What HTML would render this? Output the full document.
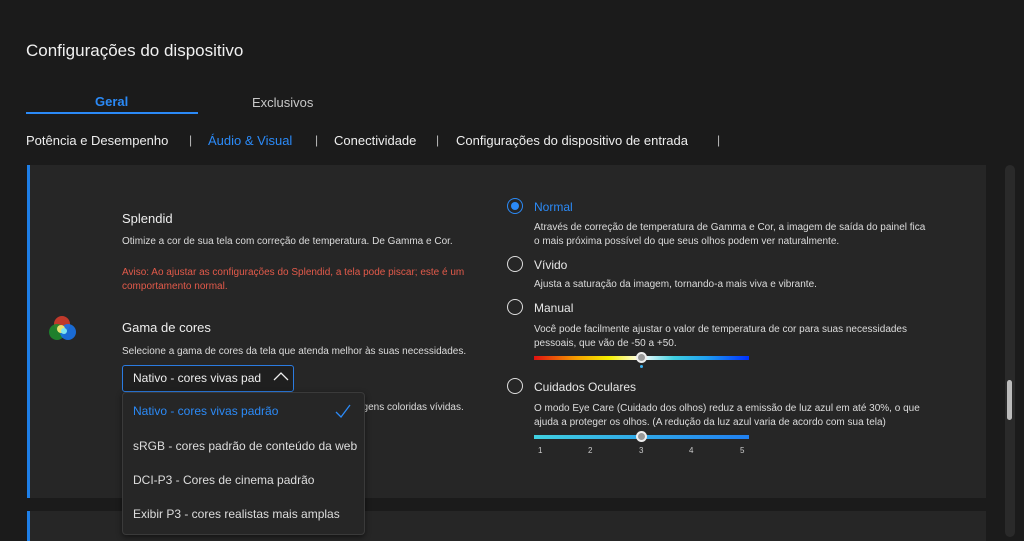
<!DOCTYPE html>
<html><head><meta charset="utf-8"><style>
*{margin:0;padding:0;box-sizing:border-box}
body{width:1024px;height:537px;background:#1b1b1b;font-family:"Liberation Sans",sans-serif;color:#e8e8e8;position:relative;overflow:hidden}
.a{position:absolute;white-space:nowrap}
.s{font-size:10px;color:#dcdcdc}
.rad{position:absolute;width:16px;height:16px;border:1.5px solid #ddd;border-radius:50%}
</style></head><body>
<div class="a" style="left:26px;top:41px;font-size:17px;color:#f0f0f0">Configurações do dispositivo</div>
<div class="a" style="left:95px;top:94px;font-size:13px;color:#2b8af7;font-weight:bold">Geral</div>
<div class="a" style="left:26px;top:112px;width:172px;height:2px;background:#2b8af7"></div>
<div class="a" style="left:252px;top:95px;font-size:13px;color:#c8c8c8">Exclusivos</div>
<div class="a" style="left:26px;top:133px;font-size:13px;color:#eee">Potência e Desempenho</div>
<div class="a" style="left:189px;top:133px;font-size:12px;color:#bbb">|</div>
<div class="a" style="left:208px;top:133px;font-size:13px;color:#2b8af7">Áudio &amp; Visual</div>
<div class="a" style="left:315px;top:133px;font-size:12px;color:#bbb">|</div>
<div class="a" style="left:334px;top:133px;font-size:13px;color:#eee">Conectividade</div>
<div class="a" style="left:436px;top:133px;font-size:12px;color:#bbb">|</div>
<div class="a" style="left:456px;top:133px;font-size:13px;color:#eee">Configurações do dispositivo de entrada</div>
<div class="a" style="left:717px;top:133px;font-size:12px;color:#bbb">|</div>

<div class="a" style="left:27px;top:165px;width:959px;height:333px;background:#262626;border-left:3px solid #1e7fe8"></div>
<div class="a" style="left:27px;top:511px;width:959px;height:30px;background:#262626;border-left:3px solid #1e7fe8"></div>
<div class="a" style="left:1005px;top:165px;width:10px;height:372px;background:#2a2a2a;border-radius:5px"></div>
<div class="a" style="left:1007px;top:380px;width:5px;height:40px;background:#bbb;border-radius:3px"></div>

<svg class="a" style="left:47px;top:313px" width="34" height="30"><circle cx="15" cy="11" r="8" fill="#c0392b"/><circle cx="10" cy="19" r="8" fill="#1e8a2e" opacity=".9"/><circle cx="21" cy="19" r="8" fill="#1a73e8" opacity=".9"/><circle cx="14" cy="16" r="4" fill="#e8e070"/><circle cx="17" cy="18" r="3" fill="#7ee6f0"/></svg>

<div class="a" style="left:122px;top:211px;font-size:13px;color:#eee">Splendid</div>
<div class="a s" style="left:122px;top:236px">Otimize a cor de sua tela com correção de temperatura. De Gamma e Cor.</div>
<div class="a s" style="left:122px;top:266px;color:#e25a4a;line-height:14px">Aviso: Ao ajustar as configurações do Splendid, a tela pode piscar; este é um<br>comportamento normal.</div>
<div class="a" style="left:122px;top:320px;font-size:13px;color:#eee">Gama de cores</div>
<div class="a s" style="left:122px;top:346px">Selecione a gama de cores da tela que atenda melhor às suas necessidades.</div>
<div class="a" style="left:122px;top:365px;width:172px;height:27px;border:1px solid #2b7be0;border-radius:3px;background:#1f1f1f"></div>
<div class="a" style="left:133px;top:371px;font-size:12px;color:#eee;width:128px;overflow:hidden">Nativo - cores vivas padrão</div>
<svg class="a" style="left:272px;top:370px" width="18" height="14"><path d="M2 10 L9 3 L16 10" stroke="#eee" stroke-width="1.3" fill="none"/></svg>
<div class="a s" style="left:357px;top:402px">agens coloridas vívidas.</div>
<div class="a" style="left:122px;top:392px;width:243px;height:143px;background:#262626;border:1px solid #3a3a3a;border-radius:4px;box-shadow:0 2px 6px rgba(0,0,0,.5)"></div>
<div class="a" style="left:133px;top:404px;font-size:12px;color:#2b8af7">Nativo - cores vivas padrão</div>
<svg class="a" style="left:334px;top:403px" width="18" height="16"><path d="M2 9 L7 14 L16 2" stroke="#2b8af7" stroke-width="1.3" fill="none"/></svg>
<div class="a" style="left:133px;top:439px;font-size:12px;color:#ddd">sRGB - cores padrão de conteúdo da web</div>
<div class="a" style="left:133px;top:473px;font-size:12px;color:#ddd">DCI-P3 - Cores de cinema padrão</div>
<div class="a" style="left:133px;top:507px;font-size:12px;color:#ddd">Exibir P3 - cores realistas mais amplas</div>

<div class="rad" style="left:507px;top:198px;border-color:#2b8af7"></div>
<div class="a" style="left:511px;top:202px;width:8px;height:8px;border-radius:50%;background:#2b8af7"></div>
<div class="a" style="left:534px;top:200px;font-size:12px;color:#2b8af7">Normal</div>
<div class="a s" style="left:534px;top:221px;line-height:14px">Através de correção de temperatura de Gamma e Cor, a imagem de saída do painel fica<br>o mais próxima possível do que seus olhos podem ver naturalmente.</div>
<div class="rad" style="left:507px;top:256px"></div>
<div class="a" style="left:534px;top:258px;font-size:12px">Vívido</div>
<div class="a s" style="left:534px;top:279px">Ajusta a saturação da imagem, tornando-a mais viva e vibrante.</div>
<div class="rad" style="left:507px;top:299px"></div>
<div class="a" style="left:534px;top:301px;font-size:12px">Manual</div>
<div class="a s" style="left:534px;top:323px;line-height:14px">Você pode facilmente ajustar o valor de temperatura de cor para suas necessidades<br>pessoais, que vão de -50 a +50.</div>
<div class="a" style="left:534px;top:356px;width:215px;height:4px;background:linear-gradient(90deg,#e01010,#f5a000 20%,#f5f000 35%,#fff 50%,#40d0e0 65%,#20a0f0 80%,#0030ff)"></div>
<div class="a" style="left:636px;top:352px;width:11px;height:11px;border-radius:50%;background:#999;border:2px solid #eee"></div>
<div class="a" style="left:640px;top:365px;width:3px;height:3px;border-radius:50%;background:#3ab0f0"></div>
<div class="rad" style="left:507px;top:378px"></div>
<div class="a" style="left:534px;top:380px;font-size:12px">Cuidados Oculares</div>
<div class="a s" style="left:534px;top:402px;line-height:14px">O modo Eye Care (Cuidado dos olhos) reduz a emissão de luz azul em até 30%, o que<br>ajuda a proteger os olhos. (A redução da luz azul varia de acordo com sua tela)</div>
<div class="a" style="left:534px;top:435px;width:215px;height:4px;background:linear-gradient(90deg,#40d0e0,#2080f0)"></div>
<div class="a" style="left:636px;top:431px;width:11px;height:11px;border-radius:50%;background:#999;border:2px solid #eee"></div>
<div class="a" style="left:538px;top:446px;font-size:8px;color:#ccc">1</div>
<div class="a" style="left:588px;top:446px;font-size:8px;color:#ccc">2</div>
<div class="a" style="left:639px;top:446px;font-size:8px;color:#ccc">3</div>
<div class="a" style="left:689px;top:446px;font-size:8px;color:#ccc">4</div>
<div class="a" style="left:740px;top:446px;font-size:8px;color:#ccc">5</div>
</body></html>
